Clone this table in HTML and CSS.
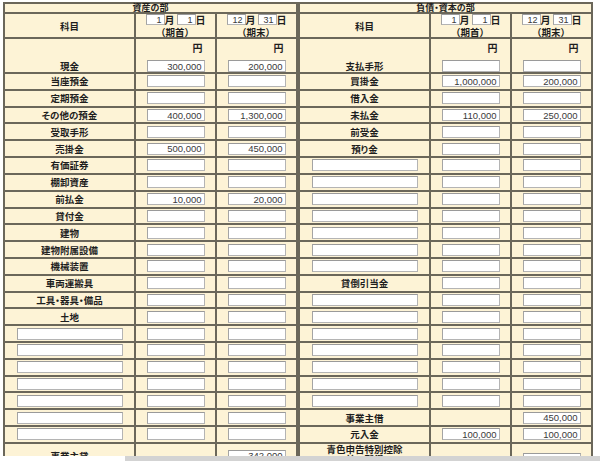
FILE: index.html
```html
<!DOCTYPE html>
<html lang="ja">
<head>
<meta charset="utf-8">
<title>貸借対照表</title>
<link rel="stylesheet" href="styles.css">
</head>
<body>
<div class="sheet">
  <section class="bs">
    <div class="cell head">資産の部</div>
    <div class="cell lbl">科目</div>
    <div class="cell date"><div class="md"><input class="dt" value="1">月<input class="dt second" value="1">日</div><div class="term">（期首）</div></div>
    <div class="cell date"><div class="md"><input class="dt" value="12">月<input class="dt second" value="31">日</div><div class="term">（期末）</div></div>

    <div class="cell lbl tall">現金</div>
    <div class="cell amt tall"><span class="yen">円</span><input class="num" value="300,000"></div>
    <div class="cell amt tall"><span class="yen">円</span><input class="num" value="200,000"></div>

    <div class="cell lbl">当座預金</div><div class="cell amt"><input class="num"></div><div class="cell amt"><input class="num"></div>
    <div class="cell lbl">定期預金</div><div class="cell amt"><input class="num"></div><div class="cell amt"><input class="num"></div>
    <div class="cell lbl">その他の預金</div><div class="cell amt"><input class="num" value="400,000"></div><div class="cell amt"><input class="num" value="1,300,000"></div>
    <div class="cell lbl">受取手形</div><div class="cell amt"><input class="num"></div><div class="cell amt"><input class="num"></div>
    <div class="cell lbl">売掛金</div><div class="cell amt"><input class="num" value="500,000"></div><div class="cell amt"><input class="num" value="450,000"></div>
    <div class="cell lbl">有価証券</div><div class="cell amt"><input class="num"></div><div class="cell amt"><input class="num"></div>
    <div class="cell lbl">棚卸資産</div><div class="cell amt"><input class="num"></div><div class="cell amt"><input class="num"></div>
    <div class="cell lbl">前払金</div><div class="cell amt"><input class="num" value="10,000"></div><div class="cell amt"><input class="num" value="20,000"></div>
    <div class="cell lbl">貸付金</div><div class="cell amt"><input class="num"></div><div class="cell amt"><input class="num"></div>
    <div class="cell lbl">建物</div><div class="cell amt"><input class="num"></div><div class="cell amt"><input class="num"></div>
    <div class="cell lbl">建物附属設備</div><div class="cell amt"><input class="num"></div><div class="cell amt"><input class="num"></div>
    <div class="cell lbl">機械装置</div><div class="cell amt"><input class="num"></div><div class="cell amt"><input class="num"></div>
    <div class="cell lbl">車両運搬具</div><div class="cell amt"><input class="num"></div><div class="cell amt"><input class="num"></div>
    <div class="cell lbl">工具・器具・備品</div><div class="cell amt"><input class="num"></div><div class="cell amt"><input class="num"></div>
    <div class="cell lbl">土地</div><div class="cell amt"><input class="num"></div><div class="cell amt"><input class="num"></div>

    <div class="cell lbl"><input class="free"></div><div class="cell amt"><input class="num"></div><div class="cell amt"><input class="num"></div>
    <div class="cell lbl"><input class="free"></div><div class="cell amt"><input class="num"></div><div class="cell amt"><input class="num"></div>
    <div class="cell lbl"><input class="free"></div><div class="cell amt"><input class="num"></div><div class="cell amt"><input class="num"></div>
    <div class="cell lbl"><input class="free"></div><div class="cell amt"><input class="num"></div><div class="cell amt"><input class="num"></div>
    <div class="cell lbl"><input class="free"></div><div class="cell amt"><input class="num"></div><div class="cell amt"><input class="num"></div>
    <div class="cell lbl"><input class="free"></div><div class="cell amt"><input class="num"></div><div class="cell amt"><input class="num"></div>
    <div class="cell lbl"><input class="free"></div><div class="cell amt"><input class="num"></div><div class="cell amt"><input class="num"></div>

    <div class="cell lbl last">事業主貸</div><div class="cell amt last"></div><div class="cell amt last"><input class="num" value="342,000"></div>
  </section>

  <section class="bs">
    <div class="cell head">負債・資本の部</div>
    <div class="cell lbl">科目</div>
    <div class="cell date"><div class="md"><input class="dt" value="1">月<input class="dt second" value="1">日</div><div class="term">（期首）</div></div>
    <div class="cell date"><div class="md"><input class="dt" value="12">月<input class="dt second" value="31">日</div><div class="term">（期末）</div></div>

    <div class="cell lbl tall">支払手形</div>
    <div class="cell amt tall"><span class="yen">円</span><input class="num"></div>
    <div class="cell amt tall"><span class="yen">円</span><input class="num"></div>

    <div class="cell lbl">買掛金</div><div class="cell amt"><input class="num" value="1,000,000"></div><div class="cell amt"><input class="num" value="200,000"></div>
    <div class="cell lbl">借入金</div><div class="cell amt"><input class="num"></div><div class="cell amt"><input class="num"></div>
    <div class="cell lbl">未払金</div><div class="cell amt"><input class="num" value="110,000"></div><div class="cell amt"><input class="num" value="250,000"></div>
    <div class="cell lbl">前受金</div><div class="cell amt"><input class="num"></div><div class="cell amt"><input class="num"></div>
    <div class="cell lbl">預り金</div><div class="cell amt"><input class="num"></div><div class="cell amt"><input class="num"></div>

    <div class="cell lbl"><input class="free"></div><div class="cell amt"><input class="num"></div><div class="cell amt"><input class="num"></div>
    <div class="cell lbl"><input class="free"></div><div class="cell amt"><input class="num"></div><div class="cell amt"><input class="num"></div>
    <div class="cell lbl"><input class="free"></div><div class="cell amt"><input class="num"></div><div class="cell amt"><input class="num"></div>
    <div class="cell lbl"><input class="free"></div><div class="cell amt"><input class="num"></div><div class="cell amt"><input class="num"></div>
    <div class="cell lbl"><input class="free"></div><div class="cell amt"><input class="num"></div><div class="cell amt"><input class="num"></div>
    <div class="cell lbl"><input class="free"></div><div class="cell amt"><input class="num"></div><div class="cell amt"><input class="num"></div>
    <div class="cell lbl"><input class="free"></div><div class="cell amt"><input class="num"></div><div class="cell amt"><input class="num"></div>

    <div class="cell lbl">貸倒引当金</div><div class="cell amt"><input class="num"></div><div class="cell amt"><input class="num"></div>

    <div class="cell lbl"><input class="free"></div><div class="cell amt"><input class="num"></div><div class="cell amt"><input class="num"></div>
    <div class="cell lbl"><input class="free"></div><div class="cell amt"><input class="num"></div><div class="cell amt"><input class="num"></div>
    <div class="cell lbl"><input class="free"></div><div class="cell amt"><input class="num"></div><div class="cell amt"><input class="num"></div>
    <div class="cell lbl"><input class="free"></div><div class="cell amt"><input class="num"></div><div class="cell amt"><input class="num"></div>
    <div class="cell lbl"><input class="free"></div><div class="cell amt"><input class="num"></div><div class="cell amt"><input class="num"></div>
    <div class="cell lbl"><input class="free"></div><div class="cell amt"><input class="num"></div><div class="cell amt"><input class="num"></div>
    <div class="cell lbl"><input class="free"></div><div class="cell amt"><input class="num"></div><div class="cell amt"><input class="num"></div>

    <div class="cell lbl">事業主借</div><div class="cell amt"></div><div class="cell amt"><input class="num" value="450,000"></div>
    <div class="cell lbl">元入金</div><div class="cell amt"><input class="num" value="100,000"></div><div class="cell amt"><input class="num" value="100,000"></div>

    <div class="cell lbl last two">青色申告特別控除<br>前の所得</div><div class="cell amt last"></div><div class="cell amt last"><input class="num low" value="1,312,000"></div>
  </section>
</div>
<div class="hscroll"><div class="hs-blank"></div><div class="hs-track"></div></div>
</body>
</html>
```

FILE: styles.css
```css
* { box-sizing: border-box; }

html, body {
  margin: 0;
  height: 461px;
  overflow: hidden;
  background: #ffffff;
}

body {
  font-family: "Noto Sans CJK JP", sans-serif;
  font-size: 9.5px;
  font-weight: 700;
  color: #1e1e1e;
  font-feature-settings: "palt";
}

.sheet {
  display: flex;
  padding: 2px 0 0 3px;
}

.bs {
  display: grid;
  grid-template-columns: 129px 79px 79px;
  grid-template-rows: 8px 23px 33px repeat(22, 14.82px) 24px;
  gap: 2px;
  padding: 2px;
  width: 295px;
  background: #6b675a;
}

.cell {
  background: #fdf3d6;
  display: flex;
  align-items: center;
  justify-content: center;
  line-height: 10px;
  min-width: 0;
  min-height: 0;
}

.head {
  grid-column: 1 / -1;
  line-height: 8px;
  font-size: 9px;
  overflow: visible;
}

.date {
  flex-direction: column;
  gap: 2px;
}

.md {
  display: flex;
  align-items: center;
  font-size: 10px;
  line-height: 10px;
}

.term {
  line-height: 10px;
  font-feature-settings: normal;
  margin-left: -1px;
}

.tall {
  align-items: flex-end;
  padding-bottom: 1px;
}

.amt.tall {
  flex-direction: column;
  align-items: center;
  justify-content: flex-end;
  padding-bottom: 0;
}

.yen {
  width: 58px;
  text-align: right;
  padding-right: 2px;
  font-size: 10px;
  line-height: 12px;
  margin-bottom: 6px;
}

.two {
  align-items: flex-start;
  line-height: 10px;
  text-align: center;
  padding-top: 0;
}

input {
  display: block;
  margin: 0;
  background: #ffffff;
  border: 1px solid #b4b4b4;
  border-top-color: #9a9a9a;
  border-left-color: #a4a4a4;
  font-family: "Liberation Sans", Arial, sans-serif;
  font-weight: 400;
  color: #3a3a3a;
  text-align: right;
  outline: none;
}

.num {
  width: 58px;
  height: 12px;
  font-size: 9.5px;
  line-height: 10px;
  padding: 0 2px;
}

.low {
  margin-top: 6px;
}

.free {
  width: 106px;
  height: 12px;
  padding: 0 2px;
}

.dt {
  width: 19px;
  height: 11px;
  font-size: 9px;
  line-height: 9px;
  padding: 0 2px;
}

.dt.second {
  margin-left: 2px;
}

.hscroll {
  position: fixed;
  left: 0;
  right: 0;
  bottom: 0;
  height: 5px;
  display: flex;
}

.hs-blank {
  width: 125px;
  background: #ffffff;
}

.hs-track {
  flex: 1;
  background: #d3d3d3;
}
```
